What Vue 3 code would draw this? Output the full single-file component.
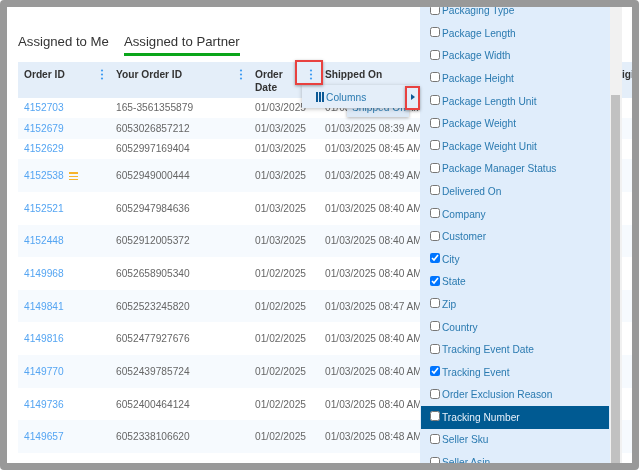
<script setup>
const rows = [
  { id: '4152703', ref: '165-3561355879', date: '01/03/2025', shipped: '01/03/2025 08:39 AM' },
  { id: '4152679', ref: '6053026857212', date: '01/03/2025', shipped: '01/03/2025 08:39 AM' },
  { id: '4152629', ref: '6052997169404', date: '01/03/2025', shipped: '01/03/2025 08:45 AM' },
  { id: '4152538', ref: '6052949000444', date: '01/03/2025', shipped: '01/03/2025 08:49 AM', tall: true, flag: true },
  { id: '4152521', ref: '6052947984636', date: '01/03/2025', shipped: '01/03/2025 08:40 AM', tall: true },
  { id: '4152448', ref: '6052912005372', date: '01/03/2025', shipped: '01/03/2025 08:40 AM', tall: true },
  { id: '4149968', ref: '6052658905340', date: '01/02/2025', shipped: '01/03/2025 08:40 AM', tall: true },
  { id: '4149841', ref: '6052523245820', date: '01/02/2025', shipped: '01/03/2025 08:47 AM', tall: true },
  { id: '4149816', ref: '6052477927676', date: '01/02/2025', shipped: '01/03/2025 08:40 AM', tall: true },
  { id: '4149770', ref: '6052439785724', date: '01/02/2025', shipped: '01/03/2025 08:40 AM', tall: true },
  { id: '4149736', ref: '6052400464124', date: '01/02/2025', shipped: '01/03/2025 08:40 AM', tall: true },
  { id: '4149657', ref: '6052338106620', date: '01/02/2025', shipped: '01/03/2025 08:48 AM', tall: true },
  { id: '', ref: '', date: '', shipped: '', tall: true }
];

const columns = [
  { name: 'Packaging Type' },
  { name: 'Package Length' },
  { name: 'Package Width' },
  { name: 'Package Height' },
  { name: 'Package Length Unit' },
  { name: 'Package Weight' },
  { name: 'Package Weight Unit' },
  { name: 'Package Manager Status' },
  { name: 'Delivered On' },
  { name: 'Company' },
  { name: 'Customer' },
  { name: 'City', on: true },
  { name: 'State', on: true },
  { name: 'Zip' },
  { name: 'Country' },
  { name: 'Tracking Event Date' },
  { name: 'Tracking Event', on: true },
  { name: 'Order Exclusion Reason' },
  { name: 'Tracking Number', active: true },
  { name: 'Seller Sku' },
  { name: 'Seller Asin' }
];
</script>

<template>
  <div class="frame">
    <div class="tabs">
      <span class="tab">Assigned to Me</span>
      <span class="tab current">Assigned to Partner</span>
    </div>

    <div class="table">
      <div class="row head">
        <div class="cell">Order ID
          <svg class="dots" width="4" height="11" viewBox="0 0 4 11"><circle cx="2" cy="1.5" r="1.1" /><circle cx="2" cy="5.5" r="1.1" /><circle cx="2" cy="9.5" r="1.1" /></svg>
        </div>
        <div class="cell">Your Order ID
          <svg class="dots" width="4" height="11" viewBox="0 0 4 11"><circle cx="2" cy="1.5" r="1.1" /><circle cx="2" cy="5.5" r="1.1" /><circle cx="2" cy="9.5" r="1.1" /></svg>
        </div>
        <div class="cell">Order<br>Date
          <svg class="dots" width="4" height="11" viewBox="0 0 4 11"><circle cx="2" cy="1.5" r="1.1" /><circle cx="2" cy="5.5" r="1.1" /><circle cx="2" cy="9.5" r="1.1" /></svg>
        </div>
        <div class="cell">Shipped On</div>
        <div class="cell">Origin</div>
      </div>
      <div v-for="(r, i) in rows" :key="i" class="row" :class="{ tall: r.tall, tint: i % 2 === 1 }">
        <div class="cell">
          <a class="link">{{ r.id }}</a>
          <span v-if="r.flag" class="flag"><i></i><i></i><i></i></span>
        </div>
        <div class="cell">{{ r.ref }}</div>
        <div class="cell">{{ r.date }}</div>
        <div class="cell">{{ r.shipped }}</div>
        <div class="cell"></div>
      </div>
    </div>

    <div class="tooltip">Shipped On</div>

    <div class="menu">
      <span class="bars"><i></i><i></i><i></i></span>
      <span class="menu-label">Columns</span>
      <span class="arrow"></span>
    </div>

    <div class="picker">
      <div class="picker-list">
        <label v-for="c in columns" :key="c.name" class="picker-item" :class="{ active: c.active }">
          <input type="checkbox" :checked="c.on">
          <span>{{ c.name }}</span>
        </label>
      </div>
      <div class="scrollbar"><div class="thumb"></div></div>
    </div>

    <div class="mark mark-dots"></div>
    <div class="mark mark-arrow"></div>
  </div>
</template>

<style scoped>
.frame {
  position: relative;
  box-sizing: border-box;
  width: 639px;
  height: 470px;
  padding: 0 0 0 11px;
  border: 7px solid #999;
  border-radius: 4px;
  background: #fff;
  overflow: hidden;
  font-family: "Liberation Sans", Arial, sans-serif;
  font-size: 10.2px;
  color: #666;
  filter: blur(0.35px);
}

.tabs {
  display: flex;
  gap: 15px;
  height: 50px;
  box-sizing: border-box;
  padding-top: 26px;
  margin-bottom: 5px;
  font-size: 13.2px;
  line-height: 17px;
  color: #333;
}

.tab {
  height: 23px;
  box-sizing: border-box;
}

.tab.current {
  border-bottom: 3px solid #0aa51a;
}

.row {
  display: grid;
  grid-template-columns: 92px 139px 70px 285px 60px;
  height: 20.5px;
  align-items: center;
}

.row.tall {
  height: 32.67px;
}

.row.tint {
  background: #f6fafe;
}

.row.head {
  height: 35.7px;
  align-items: start;
  padding-top: 6px;
  box-sizing: border-box;
  background: #e4eef9;
  font-weight: bold;
  color: #333;
  line-height: 13px;
}

.cell {
  position: relative;
  padding-left: 6px;
  white-space: nowrap;
}

.dots {
  position: absolute;
  right: 6px;
  top: 1px;
  fill: #3f9cf2;
}

.link {
  color: #55a5f2;
}

.flag {
  display: inline-flex;
  flex-direction: column;
  gap: 1.5px;
  width: 9px;
  margin-left: 5px;
  vertical-align: middle;
}

.flag i {
  height: 1.6px;
  background: #f7b52c;
}

.menu {
  position: absolute;
  left: 295px;
  top: 78px;
  width: 118px;
  height: 23px;
  padding-top: 1px;
  box-sizing: border-box;
  display: flex;
  align-items: center;
  background: #e4eef9;
  box-shadow: 0 1px 4px rgba(0, 0, 0, 0.25);
  color: #2a7ab0;
}

.bars {
  display: flex;
  gap: 0.6px;
  margin-left: 14px;
  margin-right: 2px;
}

.bars i {
  width: 2.3px;
  height: 10px;
  background: #0d5a96;
}

.arrow {
  margin-left: auto;
  margin-right: 5px;
  border-left: 4.5px solid #0d5a96;
  border-top: 3px solid transparent;
  border-bottom: 3px solid transparent;
}

.tooltip {
  position: absolute;
  left: 340px;
  top: 92px;
  width: 57px;
  height: 18px;
  padding-left: 5px;
  line-height: 18px;
  background: #dde9f6;
  box-shadow: 0 1px 3px rgba(0, 0, 0, 0.3);
  color: #2a7ab0;
}

.picker {
  position: absolute;
  left: 413px;
  top: 0;
  bottom: 0;
  width: 202px;
  display: flex;
  overflow: hidden;
}

.picker-list {
  flex: 1;
  padding: 0 1px;
  background: #e0edfb;
  overflow: hidden;
}

.picker-item {
  display: flex;
  align-items: center;
  gap: 2px;
  height: 22.6px;
  padding-left: 9px;
  color: #2a7ab0;
}

.picker-item:first-child {
  margin-top: -7.6px;
}

.picker-item input {
  width: 10px;
  height: 10px;
  margin: 0 0 2px;
}

.picker-item.active {
  background: #005a92;
  color: #e6f0fa;
}

.scrollbar {
  width: 12px;
  flex: none;
  box-sizing: border-box;
  padding: 88px 2px 0 1px;
  background: #f1f1f1;
}

.thumb {
  height: 100%;
  background: #c1c1c1;
}

.mark {
  position: absolute;
  box-sizing: border-box;
  border: 2px solid #e8413f;
  box-shadow: 0 1px 3px rgba(0, 0, 0, 0.35);
}

.mark-dots {
  left: 288px;
  top: 53px;
  width: 28px;
  height: 25px;
}

.mark-arrow {
  left: 398px;
  top: 79px;
  width: 15px;
  height: 24px;
}
</style>

<style>
html, body {
  background: #fff;
}
</style>
